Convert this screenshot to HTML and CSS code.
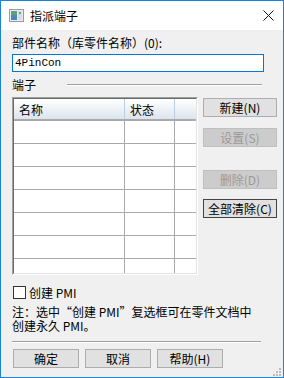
FILE: index.html
```html
<!DOCTYPE html>
<html lang="zh-CN">

<head>
    <meta charset="UTF-8">
    <title>指派端子</title>
    <link rel="stylesheet" href="styles.css">
</head>

<body>
    <div class="window">
        <div class="titlebar">
            <svg class="app-icon" width="15" height="13" viewBox="0 0 15 13">
                <rect x="0.5" y="0.5" width="14" height="12" fill="#e8eef2" stroke="#9a9a9a"/>
                <rect x="2" y="2" width="6" height="9" fill="#4f86b8"/>
                <rect x="2" y="2" width="6" height="4" fill="#5f9f7a"/>
                <rect x="9" y="2" width="4" height="9" fill="#d2dde6"/>
                <rect x="10" y="3" width="2" height="2" fill="#6aa87a"/>
            </svg>
            <span class="title">指派端子</span>
            <svg class="close" width="11" height="11" viewBox="0 0 11 11">
                <path d="M0.5 0.5 L10.5 10.5 M10.5 0.5 L0.5 10.5" stroke="#111" stroke-width="1"/>
            </svg>
        </div>

        <div class="content">
            <div class="label">部件名称（库零件名称）(0):</div>
            <div class="field">4PinCon</div>

            <div class="group-title">
                <span>端子</span>
                <span class="group-line"></span>
            </div>

            <div class="pins">
                <div class="list">
                    <div class="list-inner">
                        <div class="list-head">
                            <div class="col c1">名称</div>
                            <div class="col c2">状态</div>
                            <div class="col c3"></div>
                        </div>
                        <div class="list-row"><div class="col c1"></div><div class="col c2"></div><div class="col c3"></div></div>
                        <div class="list-row"><div class="col c1"></div><div class="col c2"></div><div class="col c3"></div></div>
                        <div class="list-row"><div class="col c1"></div><div class="col c2"></div><div class="col c3"></div></div>
                        <div class="list-row"><div class="col c1"></div><div class="col c2"></div><div class="col c3"></div></div>
                        <div class="list-row"><div class="col c1"></div><div class="col c2"></div><div class="col c3"></div></div>
                        <div class="list-row"><div class="col c1"></div><div class="col c2"></div><div class="col c3"></div></div>
                        <div class="list-row"><div class="col c1"></div><div class="col c2"></div><div class="col c3"></div></div>
                    </div>
                </div>
                <div class="side-buttons">
                    <button class="btn btn-new">新建(N)</button>
                    <button class="btn btn-set" disabled>设置(S)</button>
                    <button class="btn btn-del" disabled>删除(D)</button>
                    <button class="btn btn-clear">全部清除(C)</button>
                </div>
            </div>

            <div class="check">
                <span class="box"></span>
                <span>创建 PMI</span>
            </div>

            <p class="note">注：选中“创建 PMI”复选框可在零件文档中<br>创建永久 PMI。</p>

            <div class="sep"></div>

            <div class="bottom-buttons">
                <button class="btn">确定</button>
                <button class="btn">取消</button>
                <button class="btn">帮助(H)</button>
            </div>
        </div>

        <svg class="grip" width="8" height="8" viewBox="0 0 8 8">
            <rect x="6" y="0" width="2" height="2" fill="#bcbcbc"/>
            <rect x="3" y="3" width="2" height="2" fill="#bcbcbc"/>
            <rect x="6" y="3" width="2" height="2" fill="#bcbcbc"/>
            <rect x="0" y="6" width="2" height="2" fill="#bcbcbc"/>
            <rect x="3" y="6" width="2" height="2" fill="#bcbcbc"/>
            <rect x="6" y="6" width="2" height="2" fill="#bcbcbc"/>
        </svg>
    </div>
</body>

</html>
```

FILE: styles.css
```css
body {
    margin: 0;
    font-family: "Noto Sans CJK SC", "Noto Sans", sans-serif;
    font-size: 12px;
    color: #000;
}

.window {
    position: relative;
    width: 284px;
    height: 378px;
    box-sizing: border-box;
    border: 1px solid #1883d7;
    background-color: #f0f0f0;
}

.titlebar {
    display: flex;
    align-items: center;
    height: 29px;
    padding-left: 8px;
    background-color: #fff;
}

.title {
    margin-left: 6px;
    line-height: 14px;
}

.close {
    margin-left: auto;
    margin-right: 9px;
}

.content {
    padding: 0 0 0 11px;
}

.label {
    margin-top: 6px;
    line-height: 14px;
}

.field {
    width: 252px;
    height: 18px;
    margin-top: 4px;
    box-sizing: border-box;
    border: 1px solid #0078d7;
    background-color: #fff;
    padding-left: 2px;
    font-family: "Liberation Mono", monospace;
    font-size: 11px;
    line-height: 16px;
}

.group-title {
    display: flex;
    align-items: center;
    margin-top: 6px;
    line-height: 14px;
}

.group-line {
    width: 195px;
    margin-left: 31px;
    border-top: 1px solid #a0a0a0;
    border-bottom: 1px solid #fff;
}

.pins {
    display: flex;
    margin-top: 5px;
}

.list {
    width: 186px;
    height: 178px;
    box-sizing: border-box;
    border: 1px solid;
    border-color: #a0a0a0 #fff #fff #a0a0a0;
}

.list-inner {
    height: 100%;
    box-sizing: border-box;
    border: 1px solid;
    border-color: #696969 #e3e3e3 #e3e3e3 #696969;
    background-color: #fff;
    overflow: hidden;
}

.list-head,
.list-row {
    display: flex;
}

.list-head {
    height: 20px;
    border-bottom: 2px solid #aaaaaa;
    background: linear-gradient(#ffffff, #dce4ee);
}

.list-row {
    height: 22px;
    border-bottom: 1px solid #aaaaaa;
}

.col {
    box-sizing: border-box;
}

.c1 {
    width: 111px;
    border-right: 1px solid #aaaaaa;
}

.c2 {
    width: 50px;
    border-right: 1px solid #aaaaaa;
}

.c3 {
    flex: 1;
}

.list-head .col {
    padding: 3px 0 0 5px;
    line-height: 16px;
    border-right-color: #b9cde3;
}

.side-buttons {
    display: flex;
    flex-direction: column;
    margin-left: 5px;
}

.btn {
    width: 74px;
    height: 19px;
    padding: 0;
    box-sizing: border-box;
    border: 1px solid #adadad;
    background-color: #e1e1e1;
    font-family: "Noto Sans CJK SC", "Noto Sans", sans-serif;
    font-size: 12px;
    line-height: 16px;
    color: #000;
}

.btn:disabled {
    border-color: #bfbfbf;
    background-color: #cccccc;
    color: #9a9a9a;
}

.btn-new {
    margin-top: 1px;
}

.btn-set {
    margin-top: 11px;
}

.btn-del {
    margin-top: 23px;
}

.btn-clear {
    margin-top: 10px;
    border-color: #444;
    white-space: nowrap;
}

.check {
    display: flex;
    align-items: center;
    height: 15px;
    margin-top: 10px;
    line-height: 14px;
}

.box {
    width: 13px;
    height: 13px;
    margin-left: 1px;
    margin-right: 3px;
    box-sizing: border-box;
    border: 1px solid #333;
    background-color: #fff;
}

.note {
    margin: 5px 0 0 0;
    line-height: 14px;
    white-space: nowrap;
}

.sep {
    width: 249px;
    margin-top: 8px;
    border-top: 1px solid #a0a0a0;
    border-bottom: 1px solid #fff;
}

.bottom-buttons {
    display: flex;
    gap: 6px;
    margin-top: 6px;
    margin-left: 1px;
}

.bottom-buttons .btn {
    width: 66px;
}

.grip {
    position: absolute;
    right: 2px;
    bottom: 1px;
}
```
